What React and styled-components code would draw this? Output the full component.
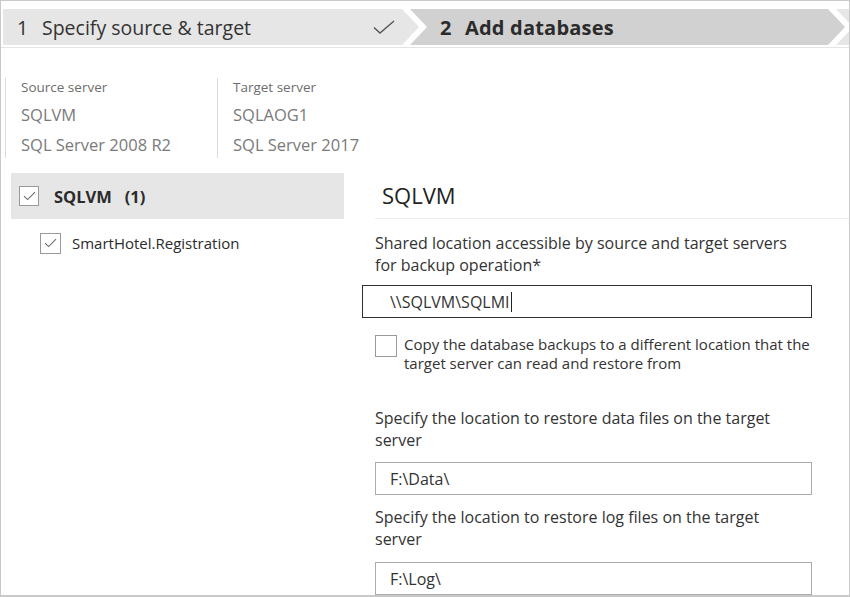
import React from "react"
import styled, { createGlobalStyle } from "styled-components"

const Global = createGlobalStyle`
  html, body {
    margin: 0;
    padding: 0;
    background: #ffffff;
  }
  body {
    font-family: "Open Sans", "Noto Sans", "Liberation Sans", sans-serif;
    color: #333333;
  }
`

const Frame = styled.div`
  width: 850px;
  height: 597px;
  box-sizing: border-box;
  border: 1px solid #c9c9c9;
  border-bottom-width: 2px;
  overflow: hidden;
  display: flex;
  flex-direction: column;
`

const StepBar = styled.div`
  display: flex;
  padding: 8px 0 2px 2px;
  border-bottom: 1px solid #e4e4e4;
  flex-shrink: 0;
`

const Step = styled.div`
  height: 36px;
  flex-shrink: 0;
  width: ${p => p.$width}px;
  margin-left: ${p => (p.$first ? 0 : -9)}px;
  background: ${p => p.$bg};
  display: flex;
  align-items: center;
  box-sizing: border-box;
  padding-left: ${p => (p.$first ? 14 : 30)}px;
  padding-right: 24px;
  font-size: ${p => (p.$active ? 20 : 19.5)}px;
  font-weight: ${p => (p.$active ? 700 : 400)};
  letter-spacing: ${p => (p.$active ? 0.2 : 0)}px;
  color: ${p => (p.$active ? "#2b2b2b" : "#333")};
  clip-path: ${p =>
    p.$first
      ? "polygon(0 0, calc(100% - 17px) 0, 100% 50%, calc(100% - 17px) 100%, 0 100%)"
      : "polygon(0 0, calc(100% - 17px) 0, 100% 50%, calc(100% - 17px) 100%, 0 100%, 17px 50%)"};
`

const StepNum = styled.span`
  width: 25px;
`

const StepLabel = styled.span`
  flex: 1;
  white-space: nowrap;
`

const Body = styled.div`
  flex: 1;
  display: flex;
  flex-direction: column;
  min-height: 0;
  padding: 30px 0 0 4px;
`

const ServerInfo = styled.div`
  display: flex;
  margin-bottom: 15px;
  flex-shrink: 0;
`

const ServerBlock = styled.div`
  width: ${p => p.$width}px;
  border-left: 1px solid #dcdcdc;
  padding-left: 15px;
  box-sizing: border-box;
  height: 80px;
`

const ServerCaption = styled.div`
  font-size: 13.5px;
  line-height: 18px;
  color: #6d6d6d;
  margin-bottom: 4px;
`

const ServerValue = styled.div`
  font-size: 16.5px;
  line-height: 30px;
  color: #7a7a7a;
  white-space: nowrap;
`

const Split = styled.div`
  flex: 1;
  display: flex;
  min-height: 0;
`

const Tree = styled.div`
  width: 357px;
  flex-shrink: 0;
  padding-left: 6px;
  box-sizing: border-box;
`

const TreeRow = styled.div`
  display: flex;
  align-items: center;
  height: ${p => (p.$selected ? 46 : 32)}px;
  width: 333px;
  padding-left: ${p => 8 + p.$level * 21}px;
  box-sizing: border-box;
  background: ${p => (p.$selected ? "#e6e6e6" : "transparent")};
  margin-top: ${p => (p.$selected ? 0 : 8)}px;
`

const CheckBox = styled.span`
  width: ${p => p.$size}px;
  height: ${p => p.$size}px;
  box-sizing: border-box;
  border: 1px solid #9a9a9a;
  background: #fff;
  display: inline-flex;
  align-items: center;
  justify-content: center;
  flex-shrink: 0;
`

const TreeText = styled.span`
  margin-left: ${p => p.$gap}px;
  font-size: ${p => (p.$bold ? 16.5 : 15)}px;
  font-weight: ${p => (p.$bold ? 700 : 400)};
  color: #2b2b2b;
  white-space: pre;
`

const RightPane = styled.div`
  flex: 1;
  padding: 0 37px 0 13px;
  box-sizing: border-box;
  display: flex;
  flex-direction: column;
`

const PaneTitle = styled.div`
  height: 46px;
  box-sizing: border-box;
  display: flex;
  align-items: center;
  font-size: 22px;
  color: #222;
  padding: 0 0 1px 7px;
  margin-right: -37px;
  border-bottom: 1px solid #ececec;
  flex-shrink: 0;
`

const FieldLabel = styled.div`
  font-size: 16px;
  line-height: 22px;
  color: #333;
  margin-top: ${p => p.$top}px;
`

const TextInput = styled.div`
  height: 33px;
  box-sizing: border-box;
  border: 1px solid ${p => (p.$focused ? "#2f2f2f" : "#ababab")};
  margin-left: ${p => (p.$focused ? -13 : 0)}px;
  margin-top: ${p => p.$top}px;
  padding-left: ${p => (p.$focused ? 27 : 14)}px;
  display: flex;
  align-items: center;
  font-size: 16px;
  color: #333;
  flex-shrink: 0;
`

const Caret = styled.span`
  display: inline-block;
  width: 1px;
  height: 20px;
  background: #222;
  margin-left: 1px;
`

const CheckOption = styled.div`
  display: flex;
  align-items: flex-start;
  margin-top: 17px;
`

const OptionText = styled.div`
  margin-left: 7px;
  font-size: 15px;
  line-height: 19px;
  color: #333;
  white-space: nowrap;
`

const Tick = () => (
  <svg width="13" height="10" viewBox="0 0 13 10">
    <path d="M1 5.2 L4.6 8.6 L12 1.2" fill="none" stroke="#6a6a6a" strokeWidth="1.1" />
  </svg>
)

const StepCheck = () => (
  <svg width="22" height="14" viewBox="0 0 22 14">
    <path d="M1 7.5 L7 13 L21 1" fill="none" stroke="#555" strokeWidth="1.4" />
  </svg>
)

export default function App() {
  return (
    <>
      <Global />
      <Frame>
        <StepBar>
          <Step $first $width={416} $bg="#e6e6e6">
            <StepNum>1</StepNum>
            <StepLabel>Specify source &amp; target</StepLabel>
            <StepCheck />
          </Step>
          <Step $active $width={435} $bg="#d1d1d1">
            <StepNum>2</StepNum>
            <StepLabel>Add databases</StepLabel>
          </Step>
          <Step $width={60} $bg="#e6e6e6" />
        </StepBar>
        <Body>
          <ServerInfo>
            <ServerBlock $width={212}>
              <ServerCaption>Source server</ServerCaption>
              <ServerValue>SQLVM</ServerValue>
              <ServerValue>SQL Server 2008 R2</ServerValue>
            </ServerBlock>
            <ServerBlock $width={160}>
              <ServerCaption>Target server</ServerCaption>
              <ServerValue>SQLAOG1</ServerValue>
              <ServerValue>SQL Server 2017</ServerValue>
            </ServerBlock>
          </ServerInfo>
          <Split>
            <Tree>
              <TreeRow $selected $level={0}>
                <CheckBox $size={20}><Tick /></CheckBox>
                <TreeText $bold $gap={15}>{"SQLVM   (1)"}</TreeText>
              </TreeRow>
              <TreeRow $level={1}>
                <CheckBox $size={21}><Tick /></CheckBox>
                <TreeText $gap={11}>SmartHotel.Registration</TreeText>
              </TreeRow>
            </Tree>
            <RightPane>
              <PaneTitle>SQLVM</PaneTitle>
              <FieldLabel $top={13}>
                Shared location accessible by source and target servers
                <br />
                for backup operation*
              </FieldLabel>
              <TextInput $focused $top={9}>
                {"\\\\SQLVM\\SQLMI"}
                <Caret />
              </TextInput>
              <CheckOption>
                <CheckBox $size={22} />
                <OptionText>
                  Copy the database backups to a different location that the
                  <br />
                  target server can read and restore from
                </OptionText>
              </CheckOption>
              <FieldLabel $top={34}>
                Specify the location to restore data files on the target
                <br />
                server
              </FieldLabel>
              <TextInput $top={11}>{"F:\\Data\\"}</TextInput>
              <FieldLabel $top={11}>
                Specify the location to restore log files on the target
                <br />
                server
              </FieldLabel>
              <TextInput $top={12}>{"F:\\Log\\"}</TextInput>
            </RightPane>
          </Split>
        </Body>
      </Frame>
    </>
  )
}
